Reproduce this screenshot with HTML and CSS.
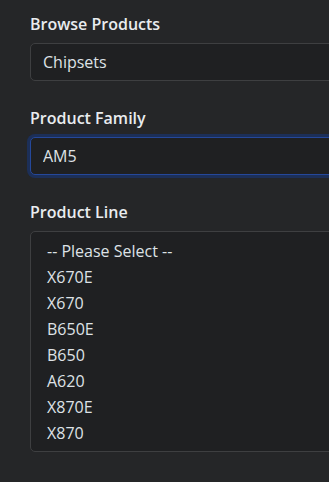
FILE: index.html
```html
<!DOCTYPE html>
<html lang="en">
<head>
  <meta charset="UTF-8">
  <title>Browse Products</title>
  <link rel="stylesheet" href="styles.css">
</head>
<body>
  <form class="browse">
    <div class="field">
      <label class="field-label" for="category">Browse Products</label>
      <select id="category" class="form-select">
        <option>Chipsets</option>
      </select>
    </div>

    <div class="field">
      <label class="field-label" for="family">Product Family</label>
      <select id="family" class="form-select is-focused">
        <option>AM5</option>
      </select>
    </div>

    <div class="field">
      <label class="field-label" for="line">Product Line</label>
      <select id="line" class="form-select list" size="8">
        <option>-- Please Select --</option>
        <option>X670E</option>
        <option>X670</option>
        <option>B650E</option>
        <option>B650</option>
        <option>A620</option>
        <option>X870E</option>
        <option>X870</option>
      </select>
    </div>
  </form>
</body>
</html>
```

FILE: styles.css
```css
* { box-sizing: border-box; }
html { overflow: hidden; }
body {
  margin: 0;
  padding: 12px 0 0 30px;
  background: #252628;
  color: #dee2e6;
  font-family: 'Open Sans', 'Noto Sans', sans-serif;
  font-size: 16px;
  line-height: 1.5;
}
.browse {
  width: 420px;
}
.field {
  margin-bottom: 25px;
}
.field-label {
  display: block;
  margin-bottom: 7px;
  font-weight: 600;
  color: #e9ecef;
}
.form-select {
  display: block;
  width: 100%;
  height: 38px;
  padding: 6px 12px;
  font: inherit;
  color: #dee2e6;
  background: #1f2022;
  border: 1px solid #3e3f41;
  border-radius: 5px;
  appearance: none;
  outline: none;
}
.form-select.is-focused {
  border-color: #25489a;
  box-shadow: 0 0 0 3px #1c2f58;
}
.form-select.list {
  height: 221px;
  padding: 7px 12px;
  overflow: hidden;
}
.form-select.list option {
  padding: 1px 4px;
  height: 26px;
  line-height: 24px;
  color: #dee2e6;
}
```
